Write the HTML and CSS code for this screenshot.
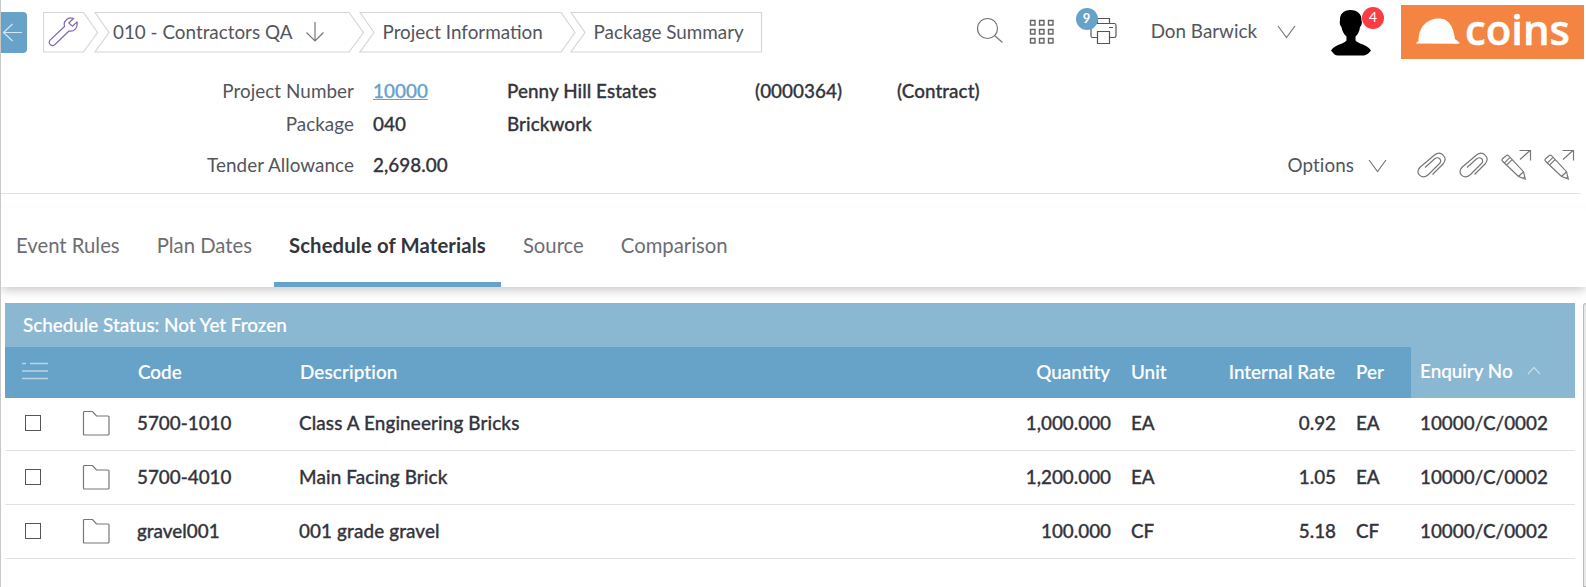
FILE: index.html
```
<!DOCTYPE html>
<html lang="en">
<head>
<meta charset="utf-8">
<title>Package Summary</title>
<link rel="stylesheet" href="styles.css">
</head>
<body>
<svg class="defs" width="0" height="0" aria-hidden="true">
  <symbol id="clip" viewBox="0 0 30 26"><path d="M15.500 22.500 26.500 11.500c4.500-6-2.500-13.500-9-8.500L2.800 15.500c-5 6 2.200 12.500 8.200 7.500L22.500 11.500c3-3.500-1-7.500-4.800-4.700L8 15.500"/></symbol>
  <symbol id="edit" viewBox="0 0 31 31"><path d="M1.500 9.800Q.3 11 1.500 12.200L17.500 27.500l6.800 2.500-1.800-7.300L7.500 6.700Q6.300 5.500 5.100 6.700zM3.500 13.800l5.500-5.500M5.800 15.800l5.500-5.500M17.500 27.500l5-4.800M22.300 29.200l1.600-1.600M19 10.500 29 1.500M18.500 1.500h11v10"/></symbol>
  <symbol id="folder" viewBox="0 0 28 26"><path d="M1.500 2.500q0-1 1-1h8l4 4.500h11.500q1 0 1 1v17q0 1-1 1h-23.500q-1 0-1-1z"/></symbol>
</svg>
<div class="app">
  <header class="topbar">
    <button class="back" aria-label="Back"><svg width="26" height="40"><path d="M21 19.500H3M11.500 11 2.500 19.500l9 8.500"/></svg></button>
    <nav class="crumbs">
      <a class="crumb crumb-tool"><svg class="shape" width="56" height="41"><path d="M.5.500h40l14 20-14 19.500H.5z"/></svg>
        <svg class="wrench" width="32" height="32"><path d="M25.500 2.500C20 .5 15 5 16.500 10.500L2.300 23.800c-3 3.400 1.300 7.500 4.700 4.700L21 15c5 1 9-3 8-9L24.500 10.200 20.800 7z"/></svg></a>
      <a class="crumb crumb-company"><svg class="shape" width="271" height="41"><path d="M1 .5h254l14.500 20-14.500 19.500H1l14-19.500z"/></svg>
        <span>010 - Contractors QA</span><svg class="down" width="20" height="22"><path d="M10 1v19M1.500 11.500l8.500 8.500 8.500-8.500"/></svg></a>
      <a class="crumb crumb-info"><svg class="shape" width="218" height="41"><path d="M1 .5h201l14 20-14 19.500H1l14-19.500z"/></svg><span>Project Information</span></a>
      <a class="crumb crumb-last"><svg class="shape" width="193" height="41"><path d="M1 .5h190.500v39.500H1l14-19.500z"/></svg><span>Package Summary</span></a>
    </nav>
    <div class="tools">
      <svg class="search" width="28" height="28"><circle cx="11.500" cy="11.500" r="10"/><path d="M18.500 18.500l8 7"/></svg>
      <svg class="apps" width="26" height="26"><path d="M1.500 1.500h4.500v4.500h-4.500zM10.500 1.500h4.500v4.500h-4.500zM19.500 1.500h4.500v4.500h-4.500zM1.500 10.500h4.500v4.500h-4.500zM10.500 10.500h4.500v4.500h-4.500zM19.500 10.500h4.500v4.500h-4.500zM1.500 19.500h4.500v4.500h-4.500zM10.500 19.500h4.500v4.500h-4.500zM19.500 19.500h4.500v4.500h-4.500z"/></svg>
      <div class="printer"><svg width="28" height="28"><path d="M7.500 6.500V1.500h12v5M7.500 20.500h-5q-1.500 0-1.500-2V8.500q0-2 1.500-2h22q1.500 0 1.500 2v10q0 2-1.500 2h-5M7.500 14.500h12v12H7.500zM19 10.500h4"/></svg><span class="badge">9</span></div>
      <span class="user">Don Barwick</span>
      <svg class="chev" width="19" height="14"><path d="M1 1l8.500 11.500L18 1"/></svg>
      <div class="avatar"><svg width="40" height="46" viewBox="0 0 40 46"><path d="M19.500 0c-7 0-11 4-10.500 11-.8 1 .2 5 1.500 6 .6 4 2.500 7.500 5 9.500v4c-3 4-11 3.500-15.500 10 2.500 3 4 5 7 5h26c3-.5 5-2.500 7-5-4.500-6.500-12-6-15.500-10v-4c2.500-2 4-5.500 4.500-9.500 1.500-1 2.500-5 1.500-6C31 4 26.500 0 19.500 0z"/></svg><span class="badge alert">4</span></div>
      <svg class="logo" width="183" height="54"><rect width="183" height="54"/><path d="M14.500 38.500 17.500 36C17.500 21 27 13.500 38 13.500c8 0 14 5 16 20.500l5 4c-2 1-4.500 1-7 .8z"/><text x="64" y="39.500" textLength="105" lengthAdjust="spacingAndGlyphs">coins</text></svg>
    </div>
  </header>

  <section class="details">
    <div class="field"><span class="label">Project Number</span><a class="link">10000</a><span>Penny Hill Estates</span><span>(0000364)</span><span>(Contract)</span></div>
    <div class="field"><span class="label">Package</span><span>040</span><span>Brickwork</span></div>
    <div class="field tender"><span class="label">Tender Allowance</span><span>2,698.00</span>
      <div class="actions"><span>Options</span><svg class="chev" width="19" height="14"><path d="M1 1l8.500 11.500L18 1"/></svg>
        <svg class="clip"><use href="#clip"/></svg><svg class="clip"><use href="#clip"/></svg><svg class="edit"><use href="#edit"/></svg><svg class="edit"><use href="#edit"/></svg></div></div>
  </section>

  <nav class="tabs"><a>Event Rules</a><a>Plan Dates</a><a class="active">Schedule of Materials</a><a>Source</a><a>Comparison</a></nav>

  <main class="content">
    <div class="table">
      <div class="status">Schedule Status: Not Yet Frozen</div>
      <div class="row head"><svg class="list" width="28" height="20"><path d="M1 2.500h4M9 2.500h18M1 10h26M1 17.500h26"/></svg><span></span><span>Code</span><span>Description</span><span class="num">Quantity</span><span>Unit</span><span class="num">Internal Rate</span><span>Per</span><span class="sorted">Enquiry No<svg width="14" height="9"><path d="M1 8l6-6.500L13 8"/></svg></span></div>
      <div class="row"><i class="check"></i><svg class="folder"><use href="#folder"/></svg><span>5700-1010</span><span>Class A Engineering Bricks</span><span class="num">1,000.000</span><span>EA</span><span class="num">0.92</span><span>EA</span><span class="enq">10000/C/0002</span></div>
      <div class="row"><i class="check"></i><svg class="folder"><use href="#folder"/></svg><span>5700-4010</span><span>Main Facing Brick</span><span class="num">1,200.000</span><span>EA</span><span class="num">1.05</span><span>EA</span><span class="enq">10000/C/0002</span></div>
      <div class="row"><i class="check"></i><svg class="folder"><use href="#folder"/></svg><span>gravel001</span><span>001 grade gravel</span><span class="num">100.000</span><span>CF</span><span class="num">5.18</span><span>CF</span><span class="enq">10000/C/0002</span></div>
    </div>
    <div class="scroll"></div>
  </main>
</div>
</body>
</html>
```

FILE: styles.css
```
* { box-sizing: border-box; }
body { margin: 0; background: #fff; color: #33343c; font: 500 18.85px/24px Lato, "Open Sans", sans-serif; }
svg { display: block; flex: none; fill: none; stroke: #777; stroke-width: 1.2; }
.defs { position: absolute; }
.app { height: 587px; overflow: hidden; border-left: 1px solid #c8c8c8; display: flex; flex-direction: column; white-space: nowrap; }

.topbar { height: 71px; display: flex; align-items: flex-start; flex: none; font-weight: 400; color: #54555c; }
.back { width: 26px; height: 41px; margin: 12px 16px 0 0; padding: 0; border: 0; border-radius: 0 4px 4px 0; background: #67a2c8; }
.back svg { stroke: #d4e7f3; }
.crumbs { display: flex; margin-top: 12px; }
.crumb { position: relative; height: 41px; display: flex; align-items: center; padding-bottom: 2px; }
.shape { position: absolute; left: 0; top: 0; stroke: #d6d6d6; }
.crumb-tool { width: 51px; padding-left: 5px; }
.wrench { stroke: #8068b0; }
.crumb-company { width: 265px; padding-left: 19px; }
.crumb-info { width: 211px; padding-left: 23.500px; }
.crumb-last { width: 193px; padding-left: 23.500px; }
.crumb span { position: relative; }
.down { margin-left: 13px; }

.tools { display: flex; margin-left: auto; padding-right: 2px; }
.search { margin: 17px 25px 0 0; }
.apps { margin: 19px 35px 0 0; stroke: #666; stroke-width: 1.4; }
.printer { position: relative; width: 28px; margin: 17px 33px 0 0; }
.printer svg { stroke: #555; }
.badge { position: absolute; left: -14px; top: -9px; width: 22px; height: 22px; border-radius: 50%; background: #67a2c8; color: #fff; font-size: 13px; line-height: 20px; text-align: center; font-weight: 700; }
.user { margin: 19px 20px 0 0; }
.topbar .chev { margin: 25px 35px 0 0; }
.avatar { position: relative; margin: 10px 30px 0 0; }
.avatar svg { fill: #000; stroke: none; }
.alert { left: 31px; top: -3px; background: #fb3c42; font-weight: 400; font-size: 14px; }
.logo { margin-top: 5px; stroke: none; fill: #fff; overflow: visible; }
.logo rect { fill: #f48441; }
.logo text { font: 600 41px "Open Sans", sans-serif; stroke: #fff; stroke-width: .5; }

.details { height: 123px; flex: none; margin-right: 5px; border-bottom: 1px solid #e2e2e2; padding-top: 3px; -webkit-text-stroke: .3px #33343c; letter-spacing: .06px; }
.field { display: grid; grid-template-columns: 353px 134px 248px 142px 1fr; height: 33px; }
.field > :first-child { text-align: right; }
.field > * { align-self: center; }
.label, .actions { color: #54555c; font-weight: 400; -webkit-text-stroke: 0; }
.field > :nth-child(2) { margin-left: 19px; }
.field > :nth-child(3) { margin-left: 19px; }
.field > :nth-child(4), .field > :nth-child(5) { margin-left: 19px; }
.link { color: #67a2c8; text-decoration: underline; -webkit-text-stroke-color: #67a2c8; }
.field.tender { margin-top: 8px; grid-template-columns: 353px 135px 1fr; }
.tender .actions { display: flex; align-items: center; justify-content: flex-end; padding-right: 6px; }
.actions .chev { margin: 3px 30px 0 14px; }
.clip { width: 30px; height: 26px; margin-right: 12px; }
.edit { width: 31px; height: 31px; }
.edit + .edit { margin-left: 12px; }

.tabs { height: 93px; flex: none; display: flex; align-items: stretch; font-size: 20.3px; font-weight: 400; color: #6c6d73; position: relative; box-shadow: 0 3px 10px rgba(0,0,0,.22); clip-path: inset(0 0 -16px 0); background: linear-gradient(#fff 10px, #fcfcfc 12px, #fff 16px); }
.tabs a { padding: 39px 15px 0; margin-right: 7px; }
.tabs .active { color: #33343c; font-weight: 700; letter-spacing: .12px; border-bottom: 5px solid #67a2c8; }

.content { flex: 1; display: flex; justify-content: space-between; padding: 16px 0 0 4px; }
.table { width: 1570px; }
.status { height: 44px; padding: 10px 18px; background: #8ab7d2; color: #fff; -webkit-text-stroke: .2px #fff; }
.row { display: grid; grid-template-columns: 77px 56px 162px 1fr 140px 84px 141px 55px 164px; height: 53.700px; align-items: center; border-bottom: 1px solid #e2e2e2; padding-bottom: 1px; -webkit-text-stroke: .3px #33343c; }
.row > :nth-child(3), .row > :nth-child(4) { margin-left: -1px; }
.row > :nth-child(4) { letter-spacing: .13px; }
.num { text-align: right; padding-right: 20px; }
.enq { padding-left: 9px; }
.row.head { height: 50.500px; border: 0; padding: 0; background: #67a2c8; color: #fff; -webkit-text-stroke: .2px #fff; }
.head > :nth-child(3), .head > :nth-child(4) { margin-left: 0; }
.head .num { padding-right: 21px; }
.list { margin: -2px 0 0 16px; stroke: #b9d5e6; stroke-width: 1.7; }
.sorted { align-self: stretch; display: flex; align-items: center; padding: 0 0 3px 9px; background: #8ab7d2; }
.sorted svg { margin-left: 14px; stroke: #c5dce9; }
.check { width: 16px; height: 16px; margin-left: 20px; border: 1px solid #555; }
.folder { width: 28px; height: 26px; stroke: #777; }
.scroll { width: 3px; border: 1px solid #bbb; border-right: 0; border-radius: 4px 0 0 0; background: #e8e8e8; }
```
